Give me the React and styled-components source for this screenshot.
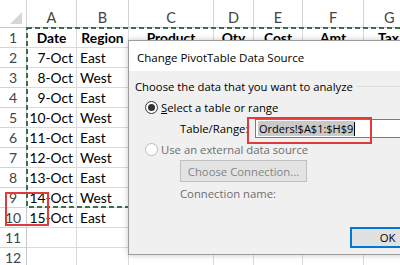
import styled, { createGlobalStyle } from 'styled-components'

const GlobalStyle = createGlobalStyle`
  body {
    margin: 0;
    background: #fff;
    overflow: hidden;
  }
`

const columns = ['A', 'B', 'C', 'D', 'E', 'F', 'G']
const headings = ['Date', 'Region', 'Product', 'Qty', 'Cost', 'Amt', 'Tax']

const rows = [
  ['7-Oct', 'East'],
  ['8-Oct', 'West'],
  ['9-Oct', 'East'],
  ['10-Oct', 'West'],
  ['11-Oct', 'East'],
  ['12-Oct', 'West'],
  ['13-Oct', 'East'],
  ['14-Oct', 'West'],
  ['15-Oct', 'East'],
]

function App() {
  return (
    <Page>
      <GlobalStyle />
      <Sheet>
        <Corner>
          <svg width="27" height="28" viewBox="0 0 27 28">
            <polygon points="10,24 22,24 22,12" fill="#d6d6d6" />
          </svg>
        </Corner>
        {columns.map((c) => (
          <ColHead key={c}>{c}</ColHead>
        ))}

        <RowHead>1</RowHead>
        {headings.map((h) => (
          <Cell key={h} $align="center" $bold>{h}</Cell>
        ))}

        {rows.map(([date, region], i) => (
          <Row key={i} n={i + 2} date={date} region={region} />
        ))}

        {[11, 12].map((n) => (
          <Row key={n} n={n} />
        ))}
      </Sheet>

      {/* copy marquee around A1:H9 */}
      <Marquee>
        <svg width="440" height="181">
          <rect x="1" y="1" width="438" height="179" fill="none"
            stroke="#35704f" strokeWidth="2" strokeDasharray="5 3" />
        </svg>
      </Marquee>
      <RedFrame $left={5} $top={192} $width={44} $height={34} />

      <Dialog>
        <TitleBar>Change PivotTable Data Source</TitleBar>
        <Body>
          <GroupTitle>Choose the data that you want to analyze</GroupTitle>

          <RadioRow $top={5}>
            <Radio $checked />
            <span><u>S</u>elect a table or range</span>
          </RadioRow>

          <RangeRow>
            <RangeLabel>Table/Range:</RangeLabel>
            <InputWrap>
              <RangeInput>
                <Selected>Orders!$A$1:$H$9</Selected>
                <Caret />
              </RangeInput>
              <RedFrame $left={-8} $top={-2} $width={125} $height={27} />
            </InputWrap>
          </RangeRow>

          <RadioRow $top={3} $disabled>
            <Radio $disabled />
            <span>Use an external data source</span>
          </RadioRow>

          <ConnectButton>Choose Connection...</ConnectButton>
          <ConnectionName>Connection name:</ConnectionName>

          <OkButton>OK</OkButton>
        </Body>
      </Dialog>
    </Page>
  )
}

function Row({ n, date, region }) {
  return (
    <>
      <RowHead>{n}</RowHead>
      <Cell $align="right">{date}</Cell>
      <Cell>{region}</Cell>
      {columns.slice(2).map((c) => (
        <Cell key={c} />
      ))}
    </>
  )
}

export default App

const Page = styled.div`
  position: relative;
  width: 400px;
  height: 265px;
  overflow: hidden;
  background: #fff;
`

const Sheet = styled.div`
  display: grid;
  width: 440px;
  grid-template-columns: 27px 50px 52px 85px 40px 49px 61px 76px;
  grid-template-rows: 28px;
  grid-auto-rows: 20px;
  font-family: Lato, "Liberation Sans", sans-serif;
  font-size: 13.8px;
  color: #000;
`

const Corner = styled.div`
  box-sizing: border-box;
  border-right: 1px solid #d4d4d4;
  border-bottom: 1px solid #c8c8c8;
  svg {
    display: block;
  }
`

const ColHead = styled.div`
  box-sizing: border-box;
  border-right: 1px solid #d4d4d4;
  border-bottom: 1px solid #c8c8c8;
  display: flex;
  align-items: center;
  justify-content: ${({ children }) => (children === 'G' ? 'flex-start' : 'center')};
  padding-left: ${({ children }) => (children === 'G' ? '20px' : '0')};
  padding-top: 8px;
  color: #444;
  font-size: 14.5px;
`

const RowHead = styled.div`
  box-sizing: border-box;
  border-right: 1px solid #c8c8c8;
  border-bottom: 1px solid #d4d4d4;
  display: flex;
  align-items: center;
  justify-content: center;
  color: #444;
  font-size: 14px;
`

const Cell = styled.div`
  box-sizing: border-box;
  border-right: 1px solid #dadada;
  border-bottom: 1px solid #dadada;
  display: flex;
  align-items: center;
  justify-content: ${({ $align }) =>
    $align === 'right' ? 'flex-end' : $align === 'center' ? 'center' : 'flex-start'};
  padding: 0 3px;
  font-weight: ${({ $bold }) => ($bold ? 700 : 400)};
  white-space: nowrap;

  &:nth-child(8n) {
    justify-content: flex-start;
    padding-left: 14px;
  }
`

const Marquee = styled.div`
  position: absolute;
  left: 26px;
  top: 27px;
  pointer-events: none;
  svg {
    display: block;
  }
`

const RedFrame = styled.div`
  position: absolute;
  left: ${({ $left }) => $left}px;
  top: ${({ $top }) => $top}px;
  width: ${({ $width }) => $width}px;
  height: ${({ $height }) => $height}px;
  box-sizing: border-box;
  border: 2px solid #e2393d;
  pointer-events: none;
`

const Dialog = styled.div`
  position: absolute;
  left: 128px;
  top: 40px;
  width: 300px;
  height: 215px;
  box-sizing: border-box;
  border: 1px solid #9c9c9c;
  box-shadow: 0 0 6px rgba(0, 0, 0, 0.22);
  display: flex;
  flex-direction: column;
  font-family: "Open Sans", "Noto Sans", sans-serif;
  font-size: 11.3px;
  color: #000;
`

const TitleBar = styled.div`
  height: 30px;
  flex-shrink: 0;
  background: #fff;
  display: flex;
  align-items: center;
  padding-left: 8px;
  padding-top: 2px;
  box-sizing: border-box;
  font-size: 11.5px;
`

const Body = styled.div`
  flex: 1;
  background: #f0f0f0;
  padding-left: 6px;
  display: flex;
  flex-direction: column;
  align-items: flex-start;
`

const GroupTitle = styled.div`
  align-self: stretch;
  margin-top: 7px;
  height: 16px;
  display: flex;
  align-items: center;
  white-space: nowrap;

  &::after {
    content: '';
    flex: 1;
    height: 1px;
    margin-left: 4px;
    background: #dcdcdc;
  }
`

const RadioRow = styled.div`
  margin-top: ${({ $top }) => $top}px;
  margin-left: 10px;
  height: 16px;
  display: flex;
  align-items: center;
  gap: 3px;
  color: ${({ $disabled }) => ($disabled ? '#6d6d6d' : '#000')};
  white-space: nowrap;
`

const Radio = styled.span`
  position: relative;
  width: 13px;
  height: 13px;
  box-sizing: border-box;
  border-radius: 50%;
  border: 1px solid ${({ $disabled }) => ($disabled ? '#bcbcbc' : '#333')};
  background: #fff;

  &::after {
    content: '';
    display: ${({ $checked }) => ($checked ? 'block' : 'none')};
    position: absolute;
    left: 2px;
    top: 2px;
    width: 7px;
    height: 7px;
    border-radius: 50%;
    background: #333;
  }
`

const RangeRow = styled.div`
  margin-top: 4px;
  margin-left: 45px;
  height: 19px;
  display: flex;
  align-items: center;
  white-space: nowrap;
`

const RangeLabel = styled.span`
  width: 75px;
`

const InputWrap = styled.div`
  position: relative;
`

const RangeInput = styled.div`
  width: 160px;
  height: 19px;
  box-sizing: border-box;
  border: 1px solid #7a7a7a;
  background: #fff;
  display: flex;
  align-items: center;
  padding-left: 2px;
  font-size: 11px;
`

const Selected = styled.span`
  background: #c9c9c9;
  line-height: 15px;
  padding: 0 1px;
`

const Caret = styled.span`
  width: 1px;
  height: 14px;
  background: #000;
`

const ConnectButton = styled.div`
  margin-top: 3px;
  margin-left: 45px;
  width: 127px;
  height: 22px;
  box-sizing: border-box;
  border: 1px solid #bfbfbf;
  background: #e3e3e3;
  color: #838383;
  display: flex;
  align-items: center;
  justify-content: center;
  white-space: nowrap;
`

const ConnectionName = styled.div`
  margin-top: 3px;
  margin-left: 45px;
  height: 16px;
  display: flex;
  align-items: center;
  color: #6d6d6d;
  white-space: nowrap;
`

const OkButton = styled.div`
  margin-top: 26px;
  margin-left: 215px;
  width: 75px;
  height: 21px;
  box-sizing: border-box;
  border: 2px solid #0078d7;
  background: #e1e1e1;
  display: flex;
  align-items: center;
  justify-content: center;
`
